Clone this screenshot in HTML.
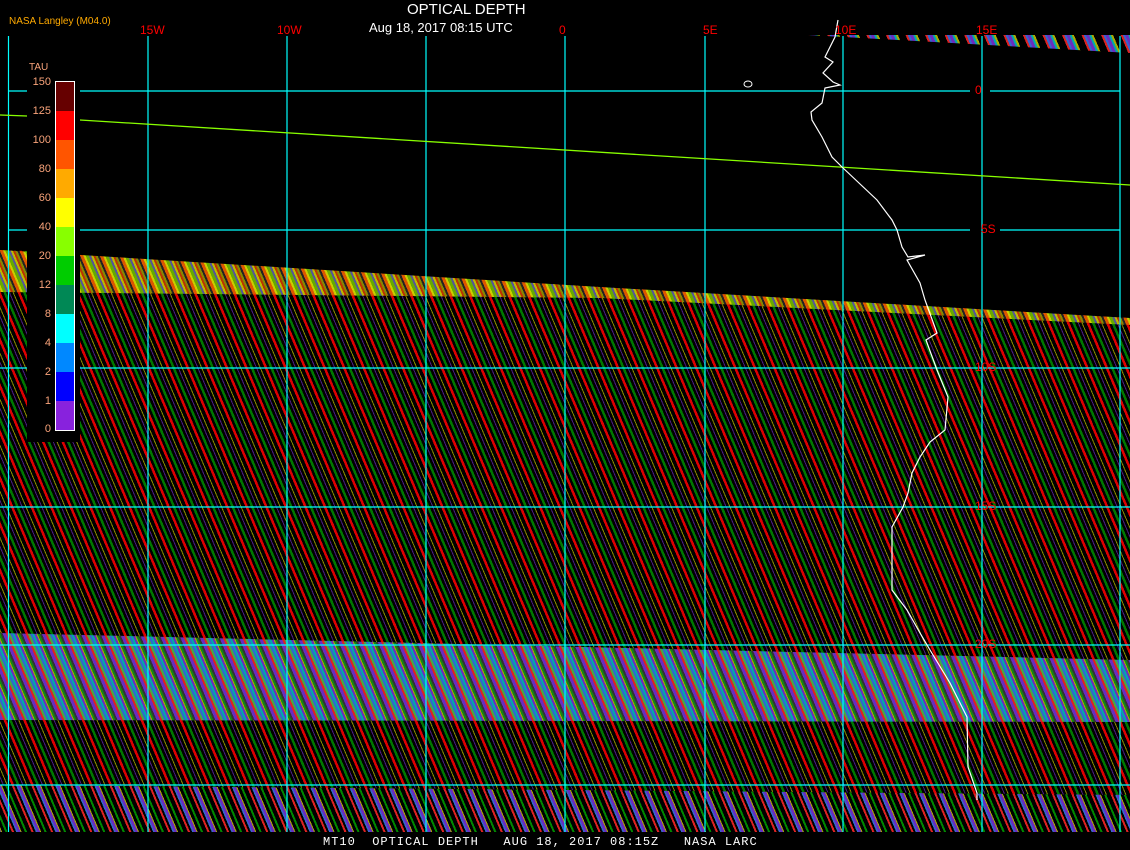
<!DOCTYPE html>
<html><head><meta charset="utf-8"><style>
html,body{margin:0;padding:0;background:#000;}
#c{position:relative;width:1130px;height:850px;overflow:hidden;background:#000;font-family:"Liberation Sans",sans-serif;}
.l{position:absolute;left:0;top:0;width:1130px;height:850px;}
#sw{background:repeating-linear-gradient(67deg,#d00 0 2.5px,#000 2.5px 5px,#070 5px 7.5px,#000 7.5px 10px,#4a1a80 10px 11px,#000 11px 13.5px,#880 13.5px 14.5px,#000 14.5px 18px);
clip-path:polygon(0 250px,80px 253px,80px 256px,600px 287px,1130px 318px,1130px 832px,0 832px);}
#br{background:repeating-linear-gradient(67deg,#d50 0 3px,#cc0 3px 5px,#6a0 5px 8px,#559 8px 10px,#bb0 10px 12px,#b30 12px 14px,#880 14px 16px,#222 16px 18px);
clip-path:polygon(0 250px,600px 287px,1130px 318px,1130px 325px,600px 298px,0 292px);}
#pb{background:repeating-linear-gradient(67deg,#d22 0 2px,#4a4 2px 4px,#36c 4px 6px,#0aa 6px 8px,#6a2cc0 8px 10px,#aa0 10px 11px,#181 11px 13px,#333 13px 15px,#6a2cc0 15px 18px);
clip-path:polygon(0 633px,1130px 660px,1130px 722px,0 720px);}
#bb{background:repeating-linear-gradient(67deg,#d22 0 2px,#000 2px 4px,#36c 4px 5.5px,#6a2cc0 5.5px 8px,#aa0 8px 9px,#000 9px 12px,#080 12px 14px,#000 14px 18px);
clip-path:polygon(0 785px,1130px 795px,1130px 832px,0 832px);}
#tr{background:repeating-linear-gradient(67deg,#d22 0 2px,#36c 2px 4px,#6a2cc0 4px 7px,#0aa 7px 9px,#aa0 9px 11px,#000 11px 18px);
clip-path:polygon(808px 35px,1130px 35px,1130px 53px);}
.t{position:absolute;white-space:nowrap;line-height:1;}
.r{color:#f00;font-size:12px;}
.lb{position:absolute;color:#f9a37a;font-size:11px;right:1079px;text-align:right;}
</style></head><body><div id="c">
<div class="l" id="sw"></div>
<div class="l" id="br"></div>
<div class="l" id="pb"></div>
<div class="l" id="bb"></div>
<div class="l" id="tr"></div>
<svg class="l" width="1130" height="850">
<g stroke="#0ff" stroke-width="1.2" fill="none">
<line x1="8.5" y1="36" x2="8.5" y2="832"/><line x1="148" y1="36" x2="148" y2="832"/><line x1="287" y1="36" x2="287" y2="832"/>
<line x1="426" y1="36" x2="426" y2="832"/><line x1="565" y1="36" x2="565" y2="832"/><line x1="705" y1="36" x2="705" y2="832"/>
<line x1="843" y1="36" x2="843" y2="832"/><line x1="982" y1="36" x2="982" y2="832"/><line x1="1120" y1="36" x2="1120" y2="832"/>
<line x1="8" y1="91" x2="970" y2="91"/><line x1="990" y1="91" x2="1120" y2="91"/>
<line x1="8" y1="230" x2="970" y2="230"/><line x1="1000" y1="230" x2="1120" y2="230"/>
<line x1="0" y1="368" x2="1130" y2="368"/><line x1="0" y1="507" x2="1130" y2="507"/>
<line x1="0" y1="645" x2="1130" y2="645"/><line x1="0" y1="785" x2="1130" y2="785"/>
</g>
<polyline points="0,115 27,116 80,120 1130,185" stroke="#8f0" stroke-width="1.3" fill="none"/>
<polyline fill="none" stroke="#fff" stroke-width="1.2" points="838,20 835,37 825,57 833,62 823,73 833,82 840,85 825,88 822,103 811,112 812,120 822,137 832,157 842,167 877,200 892,220 897,230 902,247 908,257 925,255 907,260 920,283 925,300 937,333 926,340 937,370 948,397 945,430 930,442 920,457 912,473 908,493 903,507 892,527 892,560 892,590 907,610 920,633 930,650 950,683 967,717 968,767 977,793 977,800"/>
<ellipse cx="748" cy="84" rx="4" ry="3" stroke="#fff" fill="none"/>
</svg>
<div class="t" style="left:407px;top:2px;color:#fff;font-size:15px;">OPTICAL DEPTH</div>
<div class="t" style="left:369px;top:21px;color:#fff;font-size:13px;">Aug 18, 2017 08:15 UTC</div>
<div class="t" style="left:9px;top:17px;color:#fa0;font-size:10px;">NASA Langley (M04.0)</div>
<div class="t r" style="left:140px;top:24px;">15W</div>
<div class="t r" style="left:277px;top:24px;">10W</div>
<div class="t r" style="left:559px;top:24px;">0</div>
<div class="t r" style="left:703px;top:24px;">5E</div>
<div class="t r" style="left:835px;top:24px;">10E</div>
<div class="t r" style="left:976px;top:24px;">15E</div>
<div class="t r" style="left:975px;top:84px;">0</div>
<div class="t r" style="left:981px;top:223px;">5S</div>
<div class="t r" style="left:975px;top:361px;">10S</div>
<div class="t r" style="left:975px;top:500px;">15S</div>
<div class="t r" style="left:975px;top:638px;">20S</div>
<div style="position:absolute;left:27px;top:60px;width:53px;height:382px;background:#000;"></div>
<div class="t" style="left:29px;top:63px;color:#f9a37a;font-size:10px;">TAU</div>
<div style="position:absolute;left:55px;top:81px;width:18px;height:348px;border:1px solid #fff;">
<div style="height:29px;background:#600"></div><div style="height:29px;background:#f00"></div><div style="height:29px;background:#f50"></div><div style="height:29px;background:#fa0"></div><div style="height:29px;background:#ff0"></div><div style="height:29px;background:#8f0"></div><div style="height:29px;background:#0c0"></div><div style="height:29px;background:#085"></div><div style="height:29px;background:#0ff"></div><div style="height:29px;background:#08f"></div><div style="height:29px;background:#00f"></div><div style="height:29px;background:#82d"></div>
</div>
<div class="lb" style="top:76px">150</div><div class="lb" style="top:105px">125</div><div class="lb" style="top:134px">100</div><div class="lb" style="top:163px">80</div><div class="lb" style="top:192px">60</div><div class="lb" style="top:221px">40</div><div class="lb" style="top:250px">20</div><div class="lb" style="top:279px">12</div><div class="lb" style="top:308px">8</div><div class="lb" style="top:337px">4</div><div class="lb" style="top:366px">2</div><div class="lb" style="top:395px">1</div><div class="lb" style="top:423px">0</div>
<div class="t" style="left:323px;top:836px;color:#fff;font-size:12px;font-family:'Liberation Mono',monospace;letter-spacing:1px;white-space:pre;">MT10  OPTICAL DEPTH   AUG 18, 2017 08:15Z   NASA LARC</div>
</div></body></html>
